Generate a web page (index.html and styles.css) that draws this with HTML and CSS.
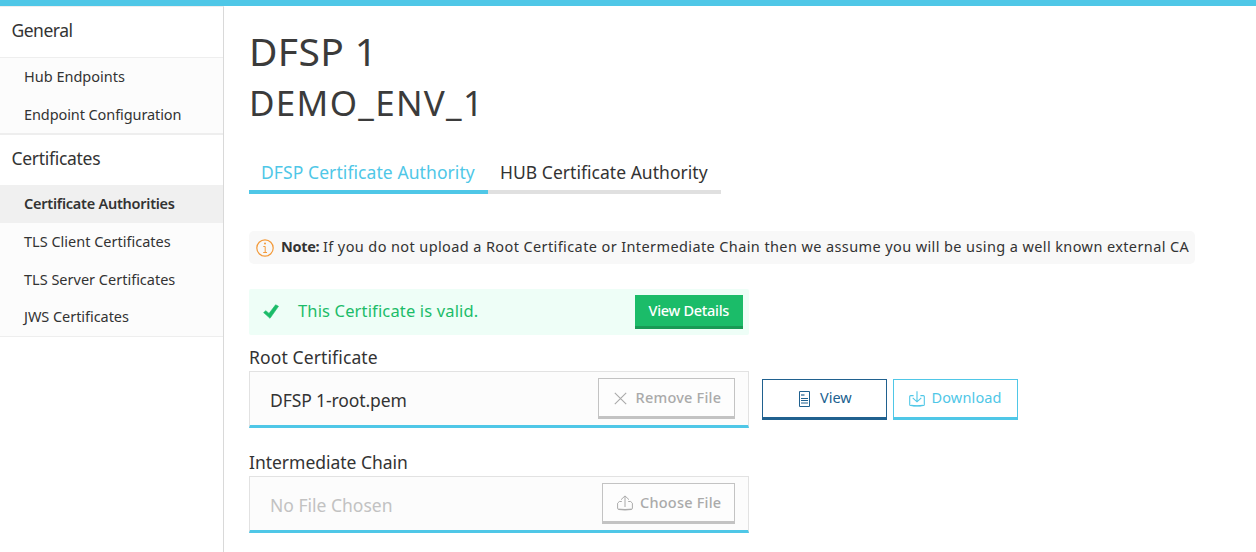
FILE: index.html
```html
<!DOCTYPE html>
<html lang="en">
<head>
<meta charset="utf-8">
<title>DFSP 1 - Certificate Authorities</title>
<link rel="stylesheet" href="styles.css">
</head>
<body>
<header class="topbar"></header>
<div class="layout">
  <nav class="sidebar">
    <div class="section-title general">General</div>
    <div class="section">
      <a class="item hub">Hub Endpoints</a>
      <a class="item endpoint">Endpoint Configuration</a>
    </div>
    <div class="section-title certs">Certificates</div>
    <div class="section last">
      <a class="item active">Certificate Authorities</a>
      <a class="item">TLS Client Certificates</a>
      <a class="item server">TLS Server Certificates</a>
      <a class="item jws">JWS Certificates</a>
    </div>
  </nav>
  <main class="content">
    <h1>DFSP 1</h1>
    <h2>DEMO_ENV_1</h2>
    <div class="tabs">
      <a class="tab selected">DFSP Certificate Authority</a>
      <a class="tab">HUB Certificate Authority</a>
    </div>
    <div class="note">
      <svg class="note-icon" width="18" height="18" viewBox="0 0 18 18" fill="none" stroke="#f39a3a"><circle cx="9" cy="9" r="8.2" stroke-width="1.2"/><path d="M7.3 7.5H9.2V13.5M7.2 13.5H11" stroke-width="1"/><circle cx="9" cy="4.6" r="1" fill="#f39a3a" stroke="none"/></svg>
      <b>Note:</b><span class="note-text">If you do not upload a Root Certificate or Intermediate Chain then we assume you will be using a well known external CA</span>
    </div>
    <div class="alert">
      <svg class="check" width="16" height="15" viewBox="0 0 16 15"><path d="M.6 8.6L2.8 6.7L6 9.4L12.6 .8L15.5 2.3L7 14.3Z" fill="#1bbc69" stroke="#1bbc69" stroke-width=".6"/></svg>
      <span class="alert-text">This Certificate is valid.</span>
      <a class="details">View Details</a>
    </div>
    <label class="label root">Root Certificate</label>
    <div class="row">
      <div class="file">
        <span class="filename">DFSP 1-root.pem</span>
        <a class="btn grey remove">
          <svg width="13" height="13" viewBox="0 0 13 13" fill="none" stroke="#aaa" stroke-width="1.1"><path d="M.8 .8L12.2 12.2M12.2 .8L.8 12.2"/></svg>
          <span>Remove File</span>
        </a>
      </div>
      <div class="actions">
        <a class="btn navy">
          <svg width="11" height="16" viewBox="0 0 11 16" fill="none" stroke="#20618f"><path d="M.5 .5H10.5V15.5H.5Z"/><path d="M2 3.5H5.5M2 4.5H5.5" stroke-opacity=".6"/><path d="M2 7.5H9M2 9.5H9"/><path d="M2 11.5H9M2 12.5H9" stroke-opacity=".5"/></svg>
          <span>View</span>
        </a>
        <a class="btn sky">
          <svg width="16" height="16" viewBox="0 0 16 16" fill="none" stroke="#4fc7e7" stroke-width="1.1"><path d="M4.6 4.6H1.7Q.7 4.6 .7 5.6V13.4Q.7 14.4 1.7 14.5Q8 15.6 14.3 14.5Q15.3 14.4 15.3 13.4V5.6Q15.3 4.6 14.3 4.6H11.4"/><path d="M2 14.2Q8 15.2 14 14.2"/><path d="M8 .3V10.5M3.7 6.8L8 10.8L12.3 6.8"/></svg>
          <span>Download</span>
        </a>
      </div>
    </div>
    <label class="label chain">Intermediate Chain</label>
    <div class="file">
      <span class="filename empty">No File Chosen</span>
      <a class="btn grey choose">
        <svg width="16" height="16" viewBox="0 0 16 16" fill="none" stroke="#aaa" stroke-width="1"><path d="M4.8 6.5H2.3L.6 8.2V13.2Q.6 14.4 1.8 14.5Q8 15.5 14.2 14.5Q15.4 14.4 15.4 13.2V8.2L13.7 6.5H11.2"/><path d="M1.4 14.1Q8 14.9 14.6 14.1"/><path d="M8 12V1M4 4.7L8 .9L12 4.7"/></svg>
        <span>Choose File</span>
      </a>
    </div>
  </main>
</div>
</body>
</html>
```
FILE: styles.css
```css
* { box-sizing: border-box; }
body {
  margin: 0;
  height: 552px;
  overflow: hidden;
  background: #fff;
  color: #333;
  font: 14.5px "Noto Sans", "Open Sans", sans-serif;
}
svg { display: block; flex: none; }
.topbar { height: 6px; background: #4fc7e7; }
.layout { display: flex; height: 546px; }

.sidebar { width: 224px; border-right: 1px solid #d9d9d9; border-top: 1px solid #eee; }
.section-title { height: 50px; padding-left: 11.5px; line-height: 47px; font-size: 17.5px; }
.general { letter-spacing: -.5px; }
.certs { letter-spacing: -.3px; }
.section { background: #fcfcfc; border-top: 1px solid #eee; border-bottom: 2px solid #eee; }
.section.last { border-top: 0; border-bottom-width: 1px; }
.item { display: block; height: 37.5px; padding-left: 24px; line-height: 37.5px; }
.last .item { height: 37.75px; }
.hub { letter-spacing: 0; }
.endpoint { line-height: 36px; letter-spacing: -.09px; }
.server { line-height: 36px; }
.jws { letter-spacing: -.05px; }
.item.active { background: #f0f0f0; font-weight: 600; letter-spacing: -.25px; }

.content { flex: 1; padding: 16px 0 0 25px; }
h1, h2 { margin: 0; font-weight: 400; color: #3b3b3b; }
h1 { height: 58px; line-height: 58px; font-size: 39px; letter-spacing: .4px; }
h2 { height: 45px; line-height: 45px; font-size: 35px; letter-spacing: 1.3px; }
.tabs { display: flex; margin-top: 31px; height: 38px; }
.tab { width: 233px; padding-left: 12px; border-bottom: 4px solid #e0e0e0; line-height: 33px; font-size: 17.5px; letter-spacing: .03px; }
.tab.selected { width: 239px; color: #4fc7e7; border-color: #4fc7e7; letter-spacing: .08px; }

.note { display: flex; width: 946px; height: 33px; margin-top: 37px; padding-left: 7px; background: #f8f8f8; border-radius: 5px; line-height: 31px; white-space: nowrap; }
.note-icon { margin-top: 8px; }
.note b { width: 41px; margin-left: 7px; letter-spacing: -.3px; }
.note-text { margin-left: 1px; letter-spacing: .393px; }

.alert { display: flex; width: 500px; height: 46px; margin-top: 25px; padding: 6px 6px 0 14px; background: #eefef7; border-radius: 2px; color: #1bbc69; }
.check { margin-top: 9px; }
.alert-text { margin-left: 19px; line-height: 32px; font-size: 16.5px; letter-spacing: .15px; }
.details { width: 108px; height: 34px; margin-left: auto; padding-left: 13.5px; background: #1bbc69; border-bottom: 3px solid #189a55; color: #fff; font-weight: 500; line-height: 31px; letter-spacing: -.28px; }

.label { display: block; height: 25px; line-height: 23px; font-size: 17.5px; }
.root { margin-top: 11px; letter-spacing: .12px; }
.chain { margin-top: 23px; letter-spacing: -.02px; }
.row { display: flex; gap: 13px; }
.file { display: flex; justify-content: space-between; width: 500px; height: 57px; padding: 6px 13px 0 20px; background: #fcfcfc; border: 1px solid #e2e2e2; border-bottom: 3px solid #4fc7e7; }
.filename { line-height: 44px; font-size: 17.5px; letter-spacing: -.1px; }
.empty { color: #c2c2c2; letter-spacing: 0; }
.actions { display: flex; gap: 6px; padding-top: 8px; }
.btn { display: flex; width: 125px; height: 41px; border: 1px solid; border-bottom-width: 3px; background: #fff; line-height: 35px; white-space: nowrap; }
.grey { border-color: #c3c3c3; color: #aaa; background: #fdfdfd; font-weight: 500; line-height: 36px; letter-spacing: .22px; }
.remove { width: 137px; padding-left: 15px; }
.remove svg { margin: 13px 8.5px 0 0; }
.choose { width: 133px; padding-left: 14px; }
.choose svg { margin: 11px 7px 0 0; }
.navy { padding-left: 36px; border-color: #20618f; color: #20618f; }
.navy svg { margin: 11px 10px 0 0; }
.sky { padding-left: 15px; border-color: #4fc7e7; color: #4fc7e7; letter-spacing: .15px; }
.sky svg { margin: 11px 6.5px 0 0; }
```
